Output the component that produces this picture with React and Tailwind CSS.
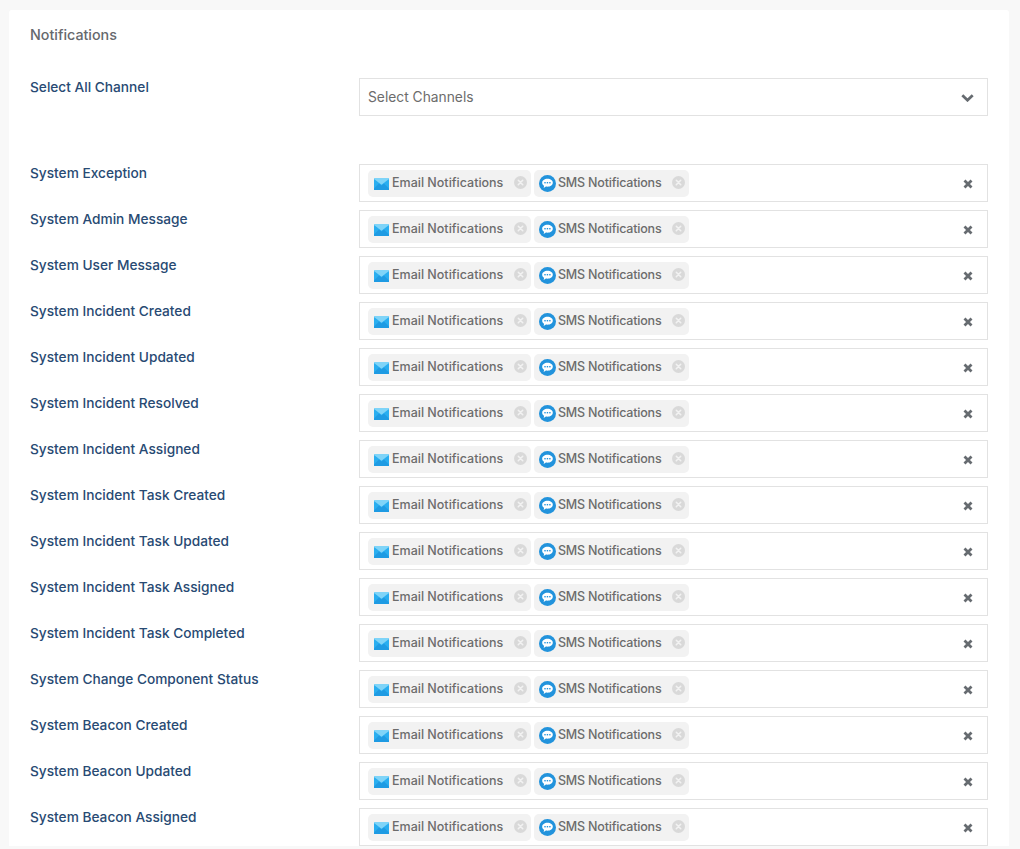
const rows = [
  'System Exception',
  'System Admin Message',
  'System User Message',
  'System Incident Created',
  'System Incident Updated',
  'System Incident Resolved',
  'System Incident Assigned',
  'System Incident Task Created',
  'System Incident Task Updated',
  'System Incident Task Assigned',
  'System Incident Task Completed',
  'System Change Component Status',
  'System Beacon Created',
  'System Beacon Updated',
  'System Beacon Assigned',
]

function MailIcon() {
  return (
    <svg width="15" height="12" viewBox="0 0 15 12" className="mt-[1px] shrink-0">
      <rect width="15" height="12" rx="1.500" fill="#29aef0" />
      <path d="M0 1 L7.500 6.800 L15 1 L15 0.500 Q15 0 14 0 L1 0 Q0 0 0 0.500 Z" fill="#7fd4f8" />
      <path d="M0 12 L0 10.500 L5 5.500 L7.500 7.400 L10 5.500 L15 10.500 L15 12 Z" fill="#1e9be3" />
    </svg>
  )
}

function SmsIcon() {
  return (
    <svg width="17" height="17" viewBox="0 0 16 16" className="mt-[1px] shrink-0">
      <circle cx="8" cy="8" r="8" fill="#2293dc" />
      <path d="M8 3.600c-2.900 0-5 1.600-5 3.700 0 1.200.7 2.200 1.800 2.900l-.4 2 2.100-1.300c.5.100 1 .1 1.500.1 2.900 0 5-1.600 5-3.700S10.900 3.600 8 3.600z" fill="#fff" />
      <rect x="5" y="6.600" width="1.300" height="1.300" fill="#2293dc" />
      <rect x="7.300" y="6.600" width="1.300" height="1.300" fill="#2293dc" />
      <rect x="9.600" y="6.600" width="1.300" height="1.300" fill="#2293dc" />
    </svg>
  )
}

function ChipClose() {
  return (
    <svg width="13" height="13" viewBox="0 0 13 13" className="ml-auto -mt-[2px] shrink-0">
      <circle cx="6.500" cy="6.500" r="6.500" fill="#d9d9d9" />
      <path d="M4.300 4.300 L8.700 8.700 M8.700 4.300 L4.300 8.700" stroke="#f2f2f2" strokeWidth="1.600" strokeLinecap="round" />
    </svg>
  )
}

function Chip({ icon, label, className, textClass }) {
  return (
    <div className={`flex h-[27px] items-center rounded-[5px] bg-[#f2f2f2] pr-[4px] ${className}`}>
      {icon}
      <span className={`whitespace-nowrap text-[12.500px] font-medium text-[#6c6c6c] ${textClass}`}>{label}</span>
      <ChipClose />
    </div>
  )
}

function ChannelInput() {
  return (
    <div className="flex h-[38px] items-center gap-[3px] border border-[#e2e2e2] pl-[8px] pr-[14px]">
      <Chip
        className="w-[163px] gap-[3px] pl-[6px]"
        icon={<MailIcon />}
        label="Email Notifications"
      />
      <Chip
        className="w-[155px] gap-[2px] pl-[5px]"
        icon={<SmsIcon />}
        label="SMS Notifications"
        textClass="tracking-[-0.2px]"
      />
      <svg width="10" height="10" viewBox="0 0 10 10" className="ml-auto mt-[1px]">
        <path d="M1.500 1.500 L8.500 8.500 M8.500 1.500 L1.500 8.500" stroke="#666b70" strokeWidth="2.800" />
      </svg>
    </div>
  )
}

export default function App() {
  return (
    <div className="h-[849px] overflow-hidden bg-[#f8f8f8] pt-[10px] pl-[9px] pr-[11px] font-['Inter',sans-serif]">
      <div className="rounded-t-[3px] bg-white px-[21px] pt-[16px]">
        <h2 className="text-[14.300px] leading-[18px] font-medium text-[#66696d]">Notifications</h2>

        <div className="mt-[34px] grid grid-cols-[329px_1fr]">
          <label className="text-[13.700px] leading-[18px] font-medium text-[#284a73]">Select All Channel</label>
          <div className="flex h-[38px] items-center justify-between border border-[#e2e2e2] pl-[8px] pr-[13px]">
            <span className="mt-[1px] text-[13.800px] text-[#6c6c6c]">Select Channels</span>
            <svg width="13" height="8" viewBox="0 0 13 8" className="mt-[2px]">
              <path d="M1.300 1.300 L6.500 6.200 L11.700 1.300" fill="none" stroke="#666b70" strokeWidth="2.800" />
            </svg>
          </div>
        </div>

        <div className="mt-[48px] flex flex-col gap-[8px]">
          {rows.map((name) => (
            <div key={name} className="grid grid-cols-[329px_1fr]">
              <label className="text-[13.700px] leading-[18px] font-medium text-[#284a73]">{name}</label>
              <ChannelInput />
            </div>
          ))}
        </div>
      </div>
    </div>
  )
}
